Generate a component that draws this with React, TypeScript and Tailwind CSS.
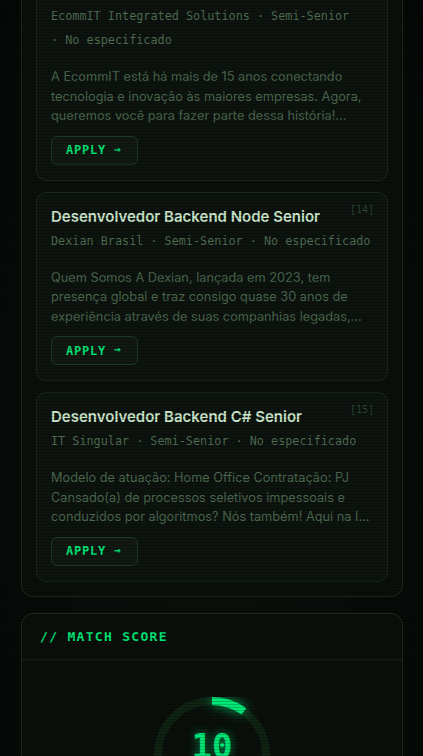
import React from 'react';

type Job = {
  id: number;
  title: string;
  company: string;
  level: string;
  salary: string;
  summary: string;
};

const jobs: Job[] = [
  {
    id: 13,
    title: '',
    company: 'EcommIT Integrated Solutions',
    level: 'Semi-Senior',
    salary: 'No especificado',
    summary:
      'A EcommIT está há mais de 15 anos conectando tecnologia e inovação às maiores empresas. Agora, queremos você para fazer parte dessa história!...',
  },
  {
    id: 14,
    title: 'Desenvolvedor Backend Node Senior',
    company: 'Dexian Brasil',
    level: 'Semi-Senior',
    salary: 'No especificado',
    summary:
      'Quem Somos A Dexian, lançada em 2023, tem presença global e traz consigo quase 30 anos de experiência através de suas companhias legadas,...',
  },
  {
    id: 15,
    title: 'Desenvolvedor Backend C# Senior',
    company: 'IT Singular',
    level: 'Semi-Senior',
    salary: 'No especificado',
    summary:
      'Modelo de atuação: Home Office Contratação: PJ Cansado(a) de processos seletivos impessoais e conduzidos por algoritmos? Nós também! Aqui na I...',
  },
];

const mono = "font-['DejaVu_Sans_Mono','Liberation_Mono',monospace]";
const sans = "font-['Inter','Noto_Sans',sans-serif]";

// the first card is scrolled past its header, so it comes in without a top edge
const JobCard: React.FC<{ job: Job; scrolled?: boolean }> = ({ job, scrolled }) => (
  <div
    className={
      scrolled
        ? 'relative rounded-b-[10px] border border-t-0 border-[#1a281b] bg-[#0d130e] px-[14px] pt-[6px] pb-[15px]'
        : 'relative rounded-[10px] border border-[#1a281b] bg-[#0d130e] px-[14px] pt-[12px] pb-[15px]'
    }
  >
    {!scrolled && (
      <>
        <span className={`${mono} absolute top-[11px] right-[13px] text-[10px] leading-[12px] text-[#2b4530]`}>
          [{job.id}]
        </span>
        <h3 className={`${sans} pr-8 text-[15px] leading-[24px] font-semibold text-[#cbe5cb]`}>{job.title}</h3>
      </>
    )}
    <div
      className={`${mono} ${scrolled ? '' : 'mt-[2px]'} flex flex-wrap gap-x-[7px] gap-y-1 text-[11.8px] leading-5 text-[#4f6b53]`}
    >
      <span>{job.company}</span>
      <span>· {job.level}</span>
      <span>· {job.salary}</span>
    </div>
    <p className={`${sans} mt-[17px] text-[12.75px] leading-[19.5px] text-[#4b684f]`}>{job.summary}</p>
    <button
      className={`${mono} mt-[10px] flex h-[29px] items-center rounded-md border border-[#1f3a24] bg-[#111912] pr-[15px] pl-[14px] text-[12px] font-bold tracking-[0.8px] text-[#00e676]`}
    >
      APPLY <span className="ml-[8px] text-[11px]">→</span>
    </button>
  </div>
);

const ScoreRing: React.FC<{ score: number }> = ({ score }) => {
  const r = 54;
  const c = 2 * Math.PI * r;
  const dash = (score / 100) * c;
  return (
    <div className="relative h-[116px] w-[116px]">
      <svg width="116" height="116" viewBox="0 0 116 116" className="-rotate-90">
        <circle cx="58" cy="58" r={r} fill="none" stroke="#0e2313" strokeWidth="8" />
        <circle
          cx="58"
          cy="58"
          r={r}
          fill="none"
          stroke="#00e676"
          strokeWidth="8"
          strokeDasharray={`${dash} ${c}`}
          className="drop-shadow-[0_0_6px_rgba(0,230,118,0.8)]"
        />
      </svg>
      <div className="absolute inset-0 flex flex-col items-center justify-center">
        <span
          className={`${mono} text-[34px] leading-[34px] font-bold text-[#00e676] [text-shadow:0_0_10px_rgba(0,230,118,0.6)]`}
        >
          {score}
        </span>
        <span className={`${mono} mt-1 text-[10px] leading-[14px] tracking-widest text-[#3f6b47]`}>/ 100</span>
      </div>
    </div>
  );
};

export default function App() {
  return (
    <div className="relative min-h-screen overflow-hidden bg-[#060907] bg-[radial-gradient(ellipse_at_center,#0b110c_0%,#080c09_60%,#050806_100%)]">
      <div className="flex flex-col gap-4 pr-5 pl-[21px] pb-10">
        <section className="rounded-b-xl border border-t-0 border-[#1b2c1d] bg-[#0a0f0b] px-[14px] pb-[14px]">
          <div className="flex flex-col gap-[11px]">
            {jobs.map((job, i) => (
              <JobCard key={job.id} job={job} scrolled={i === 0} />
            ))}
          </div>
        </section>

        <section className="rounded-xl border border-[#1b2c1d] bg-[#0a0f0b]">
          <div className="border-b border-[#18261a] px-[18px] py-3">
            <h2 className={`${mono} text-[13px] leading-[21px] font-bold tracking-widest text-[#00e676]`}>
              // MATCH SCORE
            </h2>
          </div>
          <div className="flex flex-col items-center pt-[37px] pb-8">
            <ScoreRing score={10} />
          </div>
        </section>
      </div>
      <div className="pointer-events-none fixed inset-0 bg-[repeating-linear-gradient(0deg,rgba(0,0,0,0.18)_0px,rgba(0,0,0,0.18)_1px,transparent_1px,transparent_3px)]" />
    </div>
  );
}
